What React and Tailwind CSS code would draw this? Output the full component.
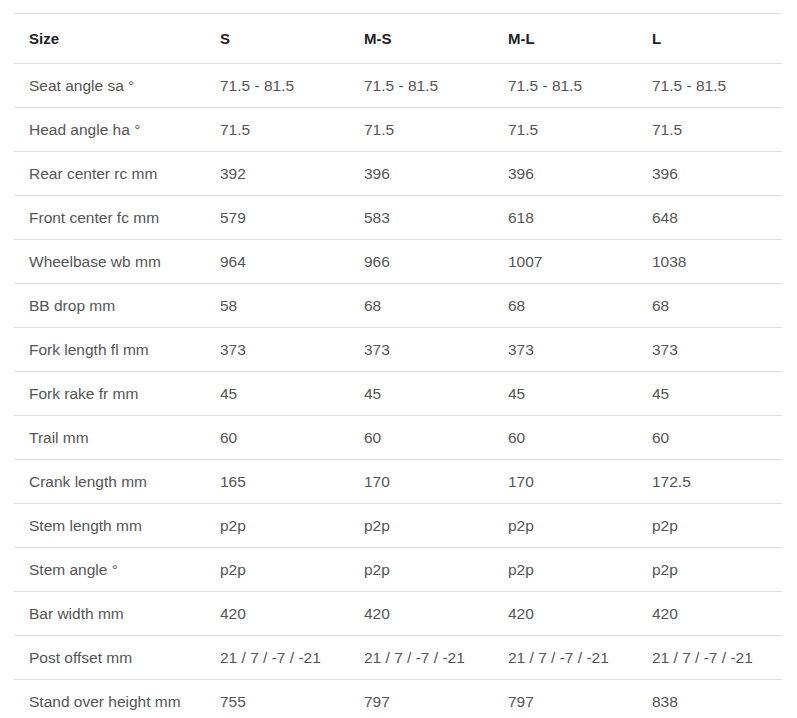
import React from 'react';

const rows = [
  ['Seat angle sa °', '71.5 - 81.5', '71.5 - 81.5', '71.5 - 81.5', '71.5 - 81.5'],
  ['Head angle ha °', '71.5', '71.5', '71.5', '71.5'],
  ['Rear center rc mm', '392', '396', '396', '396'],
  ['Front center fc mm', '579', '583', '618', '648'],
  ['Wheelbase wb mm', '964', '966', '1007', '1038'],
  ['BB drop mm', '58', '68', '68', '68'],
  ['Fork length fl mm', '373', '373', '373', '373'],
  ['Fork rake fr mm', '45', '45', '45', '45'],
  ['Trail mm', '60', '60', '60', '60'],
  ['Crank length mm', '165', '170', '170', '172.5'],
  ['Stem length mm', 'p2p', 'p2p', 'p2p', 'p2p'],
  ['Stem angle °', 'p2p', 'p2p', 'p2p', 'p2p'],
  ['Bar width mm', '420', '420', '420', '420'],
  ['Post offset mm', '21 / 7 / -7 / -21', '21 / 7 / -7 / -21', '21 / 7 / -7 / -21', '21 / 7 / -7 / -21'],
  ['Stand over height mm', '755', '797', '797', '838'],
];

const grid = 'grid grid-cols-[191px_144px_144px_144px_144px] border-t border-[#dddddd]';

export default function App() {
  return (
    <div className="bg-white min-h-screen pt-[13px] pl-[14px] font-['Liberation_Sans',Arial,sans-serif]">
      <div className="w-[768px]">
        <div className={grid + ' h-[50px] items-center text-[15px] font-bold text-[#222222]'}>
          {['Size', 'S', 'M-S', 'M-L', 'L'].map((h) => (
            <div key={h} className="pl-[15px] pt-[1px]">{h}</div>
          ))}
        </div>
        {rows.map((r) => (
          <div key={r[0]} className={grid + ' h-[44px] items-center text-[15.5px] text-[#555555]'}>
            {r.map((c, i) => (
              <div key={i} className="pl-[15px] whitespace-nowrap">{c}</div>
            ))}
          </div>
        ))}
      </div>
    </div>
  );
}
